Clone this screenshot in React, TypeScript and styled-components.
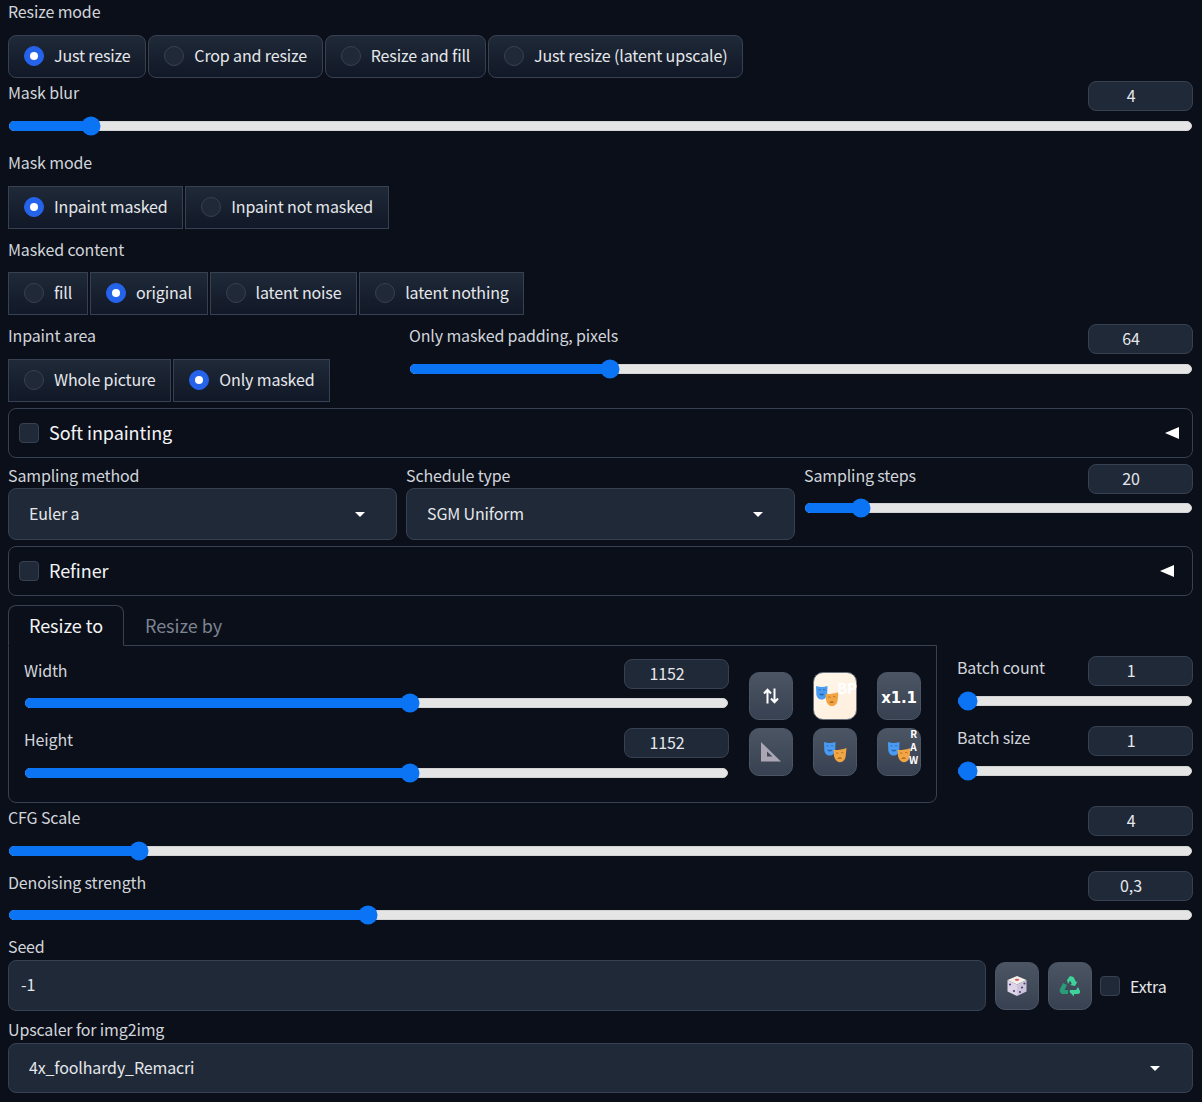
import React from "react";
import styled, { createGlobalStyle } from "styled-components";

const Global = createGlobalStyle`
  html, body { margin: 0; padding: 0; background: #0b0f19; overflow: hidden; }
  * { box-sizing: border-box; }
  body { font-family: "Noto Sans CJK SC", "Noto Sans", sans-serif; font-size: 16px; color: #d1d5db; letter-spacing: -0.14px; }
`;

const Page = styled.div`
  width: 1202px;
  height: 1102px;
  padding: 0 9px 0 8px;
  display: flex;
  flex-direction: column;
  background: #0b0f19;
`;
const Label = styled.div<{ $mt?: number }>`
  height: 24px;
  line-height: 22px;
  font-size: 16px;
  color: #d1d5db;
  margin-top: ${(p) => p.$mt ?? 0}px;
`;
const RadioRow = styled.div<{ $mt: number }>`
  display: flex;
  gap: 2px;
  margin-top: ${(p) => p.$mt}px;
`;
const RadioItem = styled.div<{ $round?: boolean }>`
  height: 43px;
  display: flex;
  align-items: center;
  gap: 10px;
  padding: 0 14.75px 1px 15px;
  border: 1px solid #374151;
  border-radius: ${(p) => (p.$round ? "8px" : "0")};
  background: linear-gradient(180deg, #1f2937, #111827);
  color: #e5e7eb;
  font-size: 16px;
  white-space: nowrap;
`;
const RadioText = styled.span`
  margin-bottom: 3px;
`;
const RadioDot = styled.span<{ $on?: boolean }>`
  width: 20px;
  height: 20px;
  border-radius: 50%;
  flex: none;
  border: 1px solid ${(p) => (p.$on ? "#2563eb" : "#374151")};
  background: ${(p) => (p.$on ? "#2563eb" : "#1f2937")};
  position: relative;
  &::after {
    content: "";
    display: ${(p) => (p.$on ? "block" : "none")};
    position: absolute;
    inset: 5px;
    border-radius: 50%;
    background: #fff;
  }
`;
const SliderField = styled.div<{ $mt?: number; $grow?: boolean }>`
  margin-top: ${(p) => p.$mt ?? 0}px;
  ${(p) => (p.$grow ? "flex: 1; min-width: 0;" : "")}
`;
const SliderHead = styled.div`
  height: 30px;
  display: flex;
  justify-content: space-between;
  align-items: flex-start;
`;
const NumberBox = styled.div`
  width: 105px;
  height: 30px;
  border: 1px solid #374151;
  border-radius: 8px;
  background: #1f2937;
  color: #e5e7eb;
  font-size: 16px;
  line-height: 26px;
  text-align: center;
  padding-right: 19px;
`;
const TrackWrap = styled.div<{ $h?: number }>`
  height: ${(p) => p.$h ?? 30}px;
  display: flex;
  align-items: center;
  padding: 0 1px;
`;
const Track = styled.div`
  position: relative;
  flex: 1;
  height: 10px;
  border-radius: 5px;
  background: #e5e5e5;
  border: 1px solid #d4d4d4;
`;
const Fill = styled.div`
  position: absolute;
  left: -1px;
  top: -1px;
  bottom: -1px;
  border-radius: 5px;
  background: #0a74f5;
`;
const Thumb = styled.div`
  position: absolute;
  top: 50%;
  width: 19px;
  height: 19px;
  border-radius: 50%;
  background: #0a74f5;
  transform: translate(-50%, -50%);
`;
const Slider = ({ pct, h }: { pct: number; h?: number }) => (
  <TrackWrap $h={h}>
    <Track>
      <Fill style={{ width: `${pct}%` }} />
      <Thumb style={{ left: `${pct}%` }} />
    </Track>
  </TrackWrap>
);
const Field = ({ label, value, pct, mt, h, grow }: { label: string; value: string; pct: number; mt?: number; h?: number; grow?: boolean }) => (
  <SliderField $mt={mt} $grow={grow}>
    <SliderHead>
      <Label>{label}</Label>
      <NumberBox>{value}</NumberBox>
    </SliderHead>
    <Slider pct={pct} h={h} />
  </SliderField>
);
const InpaintRow = styled.div`
  display: flex;
  margin-top: 9px;
`;
const InpaintLeft = styled.div`
  width: 401px;
  flex: none;
`;
const Accordion = styled.div<{ $mt: number; $pr: number }>`
  height: 50px;
  margin-top: ${(p) => p.$mt}px;
  border: 1px solid #374151;
  border-radius: 8px;
  display: flex;
  align-items: center;
  padding: 0 ${(p) => p.$pr}px 0 10px;
  gap: 10px;
  color: #f3f4f6;
  font-size: 18px;
  letter-spacing: -0.06px;
`;
const AccordionTitle = styled.span`
  flex: 1;
  line-height: 24px;
  margin-bottom: 2px;
`;
const Caret = styled.span`
  width: 0;
  height: 0;
  border-top: 6px solid transparent;
  border-bottom: 6px solid transparent;
  border-right: 14px solid #fff;
`;
const Check = styled.span`
  width: 20px;
  height: 20px;
  flex: none;
  border: 1px solid #374151;
  border-radius: 4px;
  background: #1f2937;
`;
const SamplingRow = styled.div`
  display: grid;
  grid-template-columns: 389px 389px 389px;
  gap: 9px;
  margin-top: 6px;
`;
const Dropdown = styled.div<{ $h: number; $mt?: number; $pr?: number }>`
  height: ${(p) => p.$h}px;
  margin-top: ${(p) => p.$mt ?? 0}px;
  border: 1px solid #374151;
  border-radius: 8px;
  background: #1f2937;
  display: flex;
  align-items: center;
  justify-content: space-between;
  padding: 0 ${(p) => p.$pr ?? 31}px 0 20px;
  color: #e5e7eb;
  font-size: 16px;
`;
const DropText = styled.span`
  margin-bottom: 2px;
`;
const DropCaret = styled.span`
  width: 0;
  height: 0;
  border-left: 5px solid transparent;
  border-right: 5px solid transparent;
  border-top: 5px solid #fff;
`;
const SizeRow = styled.div`
  display: flex;
  margin-top: 9px;
  height: 198px;
`;
const TabsCol = styled.div`
  width: 929px;
  flex: none;
  display: flex;
  flex-direction: column;
`;
const TabBar = styled.div`
  display: flex;
  height: 41px;
  position: relative;
  z-index: 1;
`;
const Tab = styled.div<{ $active?: boolean }>`
  width: ${(p) => (p.$active ? "116px" : "auto")};
  height: 41px;
  line-height: ${(p) => (p.$active ? "38px" : "40px")};
  padding: 0 20px;
  font-size: 18px;
  letter-spacing: -0.04px;
  white-space: nowrap;
  margin-left: ${(p) => (p.$active ? "0" : "1px")};
  color: ${(p) => (p.$active ? "#f3f4f6" : "#7c8491")};
  ${(p) =>
    p.$active
      ? "border: 1px solid #374151; border-bottom: 1px solid #0b0f19; border-radius: 8px 8px 0 0; background: #0b0f19;"
      : ""}
`;
const TabPanel = styled.div`
  margin-top: -1px;
  height: 158px;
  border: 1px solid #374151;
  border-radius: 0 0 8px 8px;
  padding: 13px 15px 0;
  display: flex;
  gap: 20px;
`;
const SizeSliders = styled.div`
  width: 705px;
  flex: none;
  display: flex;
  flex-direction: column;
`;
const ToolGrid = styled.div`
  display: grid;
  grid-template-columns: repeat(3, 44px);
  grid-auto-rows: 48px;
  gap: 8px 20px;
  margin-top: 13px;
`;
const ToolBtn = styled.div<{ $light?: boolean }>`
  width: 44px;
  height: 48px;
  border-radius: 10px;
  border: 1px solid ${(p) => (p.$light ? "#6b7280" : "#4b5563")};
  background: ${(p) => (p.$light ? "linear-gradient(135deg, #fff7ea, #ffeedd)" : "linear-gradient(180deg, #4b5563, #374151)")};
  color: #fff;
  display: flex;
  align-items: center;
  justify-content: ${(p) => (p.$light ? "flex-start" : "center")};
  padding-left: ${(p) => (p.$light ? "2px" : "0")};
  position: relative;
`;
const ZoomText = styled.span`
  font-family: "DejaVu Sans", sans-serif;
  font-weight: 700;
  font-size: 15px;
  margin-top: 3px;
`;
const Badge = styled.span`
  position: absolute;
  top: 6px;
  right: -1px;
  color: #fff;
  font-size: 15px;
  font-weight: 700;
  line-height: 18px;
`;
const RawBadge = styled.span`
  position: absolute;
  top: 0;
  right: 2px;
  display: flex;
  flex-direction: column;
  align-items: center;
  gap: 3px;
  font-size: 10px;
  line-height: 10px;
  font-weight: 700;
`;
const BatchCol = styled.div`
  flex: 1;
  padding: 51px 0 0 20px;
  display: flex;
  flex-direction: column;
`;
const SeedRow = styled.div`
  display: flex;
  align-items: center;
  margin-top: 1px;
  height: 51px;
`;
const SeedInput = styled.div`
  width: 978px;
  height: 51px;
  flex: none;
  border: 1px solid #374151;
  border-radius: 8px;
  background: #1f2937;
  padding-left: 12px;
  line-height: 47px;
  color: #e5e7eb;
  font-size: 16px;
`;
const SeedBtn = styled(ToolBtn)<{ $ml: number }>`
  margin-left: ${(p) => p.$ml}px;
`;
const ExtraCheck = styled(Check)`
  margin-left: 8px;
`;
const ExtraLabel = styled.span`
  margin-left: 10px;
  color: #e5e7eb;
  font-size: 16px;
`;

const Masks = () => (
  <svg width="23" height="22" viewBox="0 0 23 22">
    <path d="M0 1c4 1.400 7.500 1.400 11.500 0l-.3 8c-.3 3.500-2.700 5.500-5.500 5.500S.4 12.500.3 9z" fill="#4a9cf2" />
    <path d="M2.300 5.300c.8-.9 1.800-.9 2.500 0M6.800 5.300c.8-.9 1.800-.9 2.500 0" stroke="#2468b4" strokeWidth=".9" fill="none" />
    <path d="M3 8.700c1.300 2.400 4.300 2.400 5.600 0z" fill="#2468b4" />
    <path d="M9.500 9c4.500.2 8.500-.5 13-2l-.8 8c-.4 4-3.200 6.500-6 6.200S10.500 18 10 15z" fill="#f2a544" />
    <path d="M12 12.500c.8-.7 1.800-.7 2.500 0M17 12c.8-.7 1.800-.7 2.500 0" stroke="#ad6a1c" strokeWidth=".9" fill="none" />
    <path d="M13.200 18c1.300-2.200 3.500-2.200 4.800-.3z" fill="#ad6a1c" />
  </svg>
);
const Swap = () => (
  <svg width="16" height="16" viewBox="0 0 16 16" fill="none" stroke="#fff" strokeWidth="2">
    <path d="M4.500 15.500V2M1 5.500L4.500 1.800 8 5.500" />
    <path d="M11.500 .5v13.500M8 10.500l3.500 3.700 3.500-3.700" />
  </svg>
);
const Ruler = () => (
  <svg width="22" height="22" viewBox="0 0 22 22">
    <path fillRule="evenodd" d="M1 1l20 19.500H1zM7 10.500V15.500h5.500z" fill="#aaa6b4" />
  </svg>
);
const Dice = () => (
  <svg width="22" height="22" viewBox="0 0 22 22">
    <path d="M11 1l9.500 4L11 9.500 1.500 5z" fill="#f4efe9" />
    <path d="M1.500 5L11 9.500V21l-9.500-4.500z" fill="#ded6e8" />
    <path d="M20.500 5L11 9.500V21l9.500-4.500z" fill="#cdc5dc" />
    <ellipse cx="11" cy="4.800" rx="2.200" ry="1.100" fill="#e0566a" />
    <circle cx="4" cy="9.500" r="1.100" fill="#54407e" />
    <circle cx="8" cy="16" r="1.100" fill="#54407e" />
    <circle cx="14" cy="17" r="1.100" fill="#54407e" />
    <circle cx="16" cy="12.500" r="1.100" fill="#54407e" />
    <circle cx="18.500" cy="8.500" r="1.100" fill="#54407e" />
  </svg>
);
const Recycle = () => (
  <svg width="22" height="22" viewBox="0 0 22 22">
    <path d="M8 5l3-4 3.500 1 2.500 5 1.500-.5L16 11l-5-1 1.800-1L11 5.500 9 9z" fill="#3dd39a" />
    <path d="M1 14l3-6 4 2-2.500 5H9v4H4c-2.500 0-4-2.500-3-5z" fill="#2a9d78" />
    <path d="M11 15h6l2-3 2 4c.5 2-.5 3-2.500 3H15v2.500L10.500 17z" fill="#3dd39a" />
  </svg>
);

const Opt = ({ t, on, round }: { t: string; on?: boolean; round?: boolean }) => (
  <RadioItem $round={round}>
    <RadioDot $on={on} />
    <RadioText>{t}</RadioText>
  </RadioItem>
);

export default function App() {
  return (
    <Page>
      <Global />
      <Label>Resize mode</Label>
      <RadioRow $mt={11}>
        <Opt round on t="Just resize" />
        <Opt round t="Crop and resize" />
        <Opt round t="Resize and fill" />
        <Opt round t="Just resize (latent upscale)" />
      </RadioRow>
      <Field label="Mask blur" value="4" pct={6.9} mt={3} />
      <Label $mt={10}>Mask mode</Label>
      <RadioRow $mt={11}>
        <Opt on t="Inpaint masked" />
        <Opt t="Inpaint not masked" />
      </RadioRow>
      <Label $mt={9}>Masked content</Label>
      <RadioRow $mt={10}>
        <Opt t="fill" />
        <Opt on t="original" />
        <Opt t="latent noise" />
        <Opt t="latent nothing" />
      </RadioRow>
      <InpaintRow>
        <InpaintLeft>
          <Label>Inpaint area</Label>
          <RadioRow $mt={11}>
            <Opt t="Whole picture" />
            <Opt on t="Only masked" />
          </RadioRow>
        </InpaintLeft>
        <Field grow label="Only masked padding, pixels" value="64" pct={25.5} />
      </InpaintRow>
      <Accordion $mt={6} $pr={13}>
        <Check />
        <AccordionTitle>Soft inpainting</AccordionTitle>
        <Caret />
      </Accordion>
      <SamplingRow>
        <div>
          <Label>Sampling method</Label>
          <Dropdown $h={52}>
            <DropText>Euler a</DropText>
            <DropCaret />
          </Dropdown>
        </div>
        <div>
          <Label>Schedule type</Label>
          <Dropdown $h={52}>
            <DropText>SGM Uniform</DropText>
            <DropCaret />
          </Dropdown>
        </div>
        <Field label="Sampling steps" value="20" pct={14.2} h={28} />
      </SamplingRow>
      <Accordion $mt={6} $pr={18}>
        <Check />
        <AccordionTitle>Refiner</AccordionTitle>
        <Caret />
      </Accordion>
      <SizeRow>
        <TabsCol>
          <TabBar>
            <Tab $active>Resize to</Tab>
            <Tab>Resize by</Tab>
          </TabBar>
          <TabPanel>
            <SizeSliders>
              <Field label="Width" value="1152" pct={54.8} h={28} />
              <Field label="Height" value="1152" pct={54.8} mt={11} />
            </SizeSliders>
            <ToolGrid>
              <ToolBtn>
                <Swap />
              </ToolBtn>
              <ToolBtn $light>
                <Masks />
                <Badge>BP</Badge>
              </ToolBtn>
              <ToolBtn>
                <ZoomText>x1.1</ZoomText>
              </ToolBtn>
              <ToolBtn>
                <Ruler />
              </ToolBtn>
              <ToolBtn>
                <Masks />
              </ToolBtn>
              <ToolBtn>
                <Masks />
                <RawBadge>
                  <span>R</span>
                  <span>A</span>
                  <span>W</span>
                </RawBadge>
              </ToolBtn>
            </ToolGrid>
          </TabPanel>
        </TabsCol>
        <BatchCol>
          <Field label="Batch count" value="1" pct={3.8} />
          <Field label="Batch size" value="1" pct={3.8} mt={10} />
        </BatchCol>
      </SizeRow>
      <Field label="CFG Scale" value="4" pct={10.9} mt={3} />
      <Field label="Denoising strength" value="0,3" pct={30.3} mt={5} h={28} />
      <Label $mt={6}>Seed</Label>
      <SeedRow>
        <SeedInput>-1</SeedInput>
        <SeedBtn $ml={9}>
          <Dice />
        </SeedBtn>
        <SeedBtn $ml={9}>
          <Recycle />
        </SeedBtn>
        <ExtraCheck />
        <ExtraLabel>Extra</ExtraLabel>
      </SeedRow>
      <Label $mt={7}>Upscaler for img2img</Label>
      <Dropdown $h={50} $mt={1} $pr={32}>
        <DropText>4x_foolhardy_Remacri</DropText>
        <DropCaret />
      </Dropdown>
    </Page>
  );
}
